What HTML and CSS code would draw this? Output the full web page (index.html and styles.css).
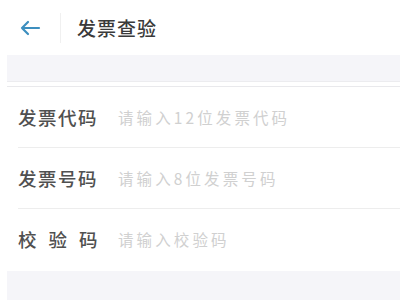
FILE: index.html
```html
<!DOCTYPE html>
<html lang="zh">
<head>
<meta charset="utf-8">
<link rel="stylesheet" href="styles.css">
</head>
<body>
<div class="page">
  <header class="topbar">
    <span class="back">
      <svg width="22" height="16" viewBox="0 0 22 16"><path d="M20 8H3M9 2L3 8l6 6" fill="none" stroke="#3d8fbf" stroke-width="2.2" stroke-linecap="round" stroke-linejoin="round"/></svg>
    </span>
    <span class="vdiv"></span>
    <h1 class="title">发票查验</h1>
  </header>
  <div class="band"></div>
  <div class="list">
    <div class="row"><span class="label">发票代码</span><span class="ph">请输入12位发票代码</span></div>
    <div class="row"><span class="label">发票号码</span><span class="ph">请输入8位发票号码</span></div>
    <div class="row last"><span class="label spread">校验码</span><span class="ph">请输入校验码</span></div>
  </div>
  <div class="band bottom"></div>
</div>
</body>
</html>
```
FILE: styles.css
```css
html, body { margin: 0; padding: 0; background: #fff; }
body { font-family: "Noto Sans CJK SC", "Noto Sans", sans-serif; width: 400px; height: 300px; overflow: hidden; }
.page { display: flex; flex-direction: column; }
.topbar { height: 55px; display: flex; align-items: center; }
.back { width: 22px; height: 16px; margin-left: 19px; display: flex; }
.vdiv { width: 1px; height: 30px; background: #f0f0f0; margin-left: 19px; }
.title { margin: 0 0 0 16px; font-size: 19px; font-weight: 500; color: #3a3a3a; letter-spacing: 1px; }
.band { height: 26px; margin-left: 7px; background: #f5f5f9; border-bottom: 1px solid #ececef; }
.list { margin-top: 4px; border-top: 1px solid #e9e9ec; margin-left: 7px; }
.row { height: 60px; margin-left: 11px; display: flex; align-items: center; border-bottom: 1px solid #ededed; }
.row.last { border-bottom: none; }
.label { width: 80px; font-size: 18.5px; font-weight: 500; color: #505050; letter-spacing: 1.5px; white-space: nowrap; }
.label.spread { letter-spacing: 12px; }
.ph { margin-left: 20px; font-size: 15.5px; color: #d0d0d0; letter-spacing: 3.1px; }
.band.bottom { height: 40px; margin-top: 2px; border-bottom: none; }
```
